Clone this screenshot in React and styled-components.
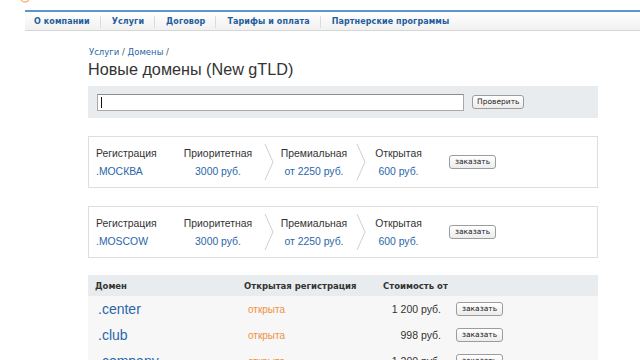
import React from "react";
import styled, { createGlobalStyle } from "styled-components";

const Global = createGlobalStyle`
  html, body { margin: 0; padding: 0; background: #fff; }
  body { font-family: "DejaVu Sans", Verdana, sans-serif; color: #333; overflow: hidden; }
  * { box-sizing: border-box; }
`;

const Page = styled.div`
  width: 640px;
  height: 360px;
  overflow: hidden;
  position: relative;
`;

const LogoBit = styled.svg`
  position: absolute;
  left: 20px;
  top: 0;
`;

const Nav = styled.nav`
  margin: 10px 0 0 25px;
  height: 21px;
  padding-top: 1px;
  border-top: 2px solid #5b97cf;
  border-bottom: 1px solid #d6d6d6;
  background: linear-gradient(#ffffff, #f1f1f1);
  display: flex;
  align-items: center;
`;

const NavItem = styled.a`
  font-family: "DejaVu Sans", Verdana, sans-serif;
  font-weight: bold;
  font-size: 8px;
  letter-spacing: 0.1px;
  color: #1f5d9c;
  text-decoration: none;
  padding: 0 10px 0 ${p => (p.$first ? 9 : 11)}px;
  line-height: 12px;
  border-left: ${p => (p.$first ? "none" : "1px solid #dcdcdc")};
`;

const Main = styled.main`
  width: 510px;
  margin-left: 88px;
  padding-top: 16px;
`;

const Crumbs = styled.div`
  font-size: 8.5px;
  line-height: 11px;
  color: #555;
  padding-left: 1px;
  a { color: #2a66aa; text-decoration: none; }
`;

const Title = styled.h1`
  margin: 0;
  font-family: "Liberation Sans", Arial, sans-serif;
  font-weight: normal;
  font-size: 16.2px;
  line-height: 22px;
  color: #333;
`;

const SearchPanel = styled.div`
  margin-top: 6px;
  height: 32px;
  background: #e8ecee;
  display: flex;
  align-items: center;
  padding-left: 9px;
`;

const InputWrap = styled.div`
  position: relative;
  width: 367px;
  height: 17px;
  background: #fff;
  border: 1px solid #a9a9a9;
  border-top-color: #8c8c8c;
  &::after {
    content: "";
    position: absolute;
    left: 3px;
    top: 2px;
    width: 1px;
    height: 11px;
    background: #111;
  }
`;

const Btn = styled.button`
  font-family: "DejaVu Sans", Verdana, sans-serif;
  font-size: 7.5px;
  color: #222;
  height: 14px;
  padding: 0 ${p => (p.$big ? "4px" : "5px")};
  line-height: 12px;
  border: 1px solid #9c9c9c;
  border-radius: 3px;
  background: linear-gradient(#ffffff, #ececec);
  margin-left: ${p => p.$ml || 0}px;
  cursor: pointer;
  white-space: nowrap;
`;

const Offer = styled.div`
  margin-top: 18px;
  height: 52px;
  border: 1px solid #dedede;
  display: flex;
  align-items: center;
  padding-left: 7px;
`;

const Cell = styled.div`
  display: flex;
  flex-direction: column;
  align-items: ${p => (p.$left ? "flex-start" : "center")};
  width: ${p => p.$w}px;
  padding-top: 1px;
  font-family: "Liberation Sans", Arial, sans-serif;
  font-size: 10.4px;
  line-height: 18px;
  white-space: nowrap;
`;

const Label = styled.span`
  color: #333;
`;

const Value = styled.span`
  color: #2a66aa;
`;

const ChevronSvg = styled.svg`
  flex: none;
`;

const Chevron = ({ x }) => (
  <ChevronSvg width="18" height="38" viewBox="0 0 18 38">
    <path d={`M${x} 1 L${x + 8} 19 L${x} 37`} fill="none" stroke="#cfcfcf" strokeWidth="1" />
  </ChevronSvg>
);

const Table = styled.div`
  margin-top: 17px;
  display: grid;
  grid-template-columns: 149px 139px 72px 1fr;
`;

const Head = styled.div`
  background: #e8ecee;
  height: 21px;
  display: flex;
  align-items: center;
  padding-left: 7px;
  font-family: "DejaVu Sans", Verdana, sans-serif;
  font-weight: bold;
  font-size: 8.5px;
  color: #333;
  white-space: nowrap;
`;

const Td = styled.div`
  background: #f7f7f7;
  height: 26px;
  display: flex;
  align-items: center;
  justify-content: ${p => (p.$right ? "flex-end" : "flex-start")};
  padding: ${p => (p.$right ? "0 7px 0 0" : `0 0 0 ${p.$pl || 0}px`)};
  font-family: "Liberation Sans", Arial, sans-serif;
  white-space: nowrap;
`;

const Domain = styled.a`
  font-size: 14px;
  color: #2a66aa;
  text-decoration: none;
`;

const Status = styled.span`
  font-size: 10px;
  color: #f0913e;
`;

const Price = styled.span`
  font-size: 10.5px;
  color: #333;
`;

const offers = [".МОСКВА", ".MOSCOW"];
const rows = [
  [".center", "1 200 руб."],
  [".club", "998 руб."],
  [".company", "1 200 руб."],
];

export default function App() {
  return (
    <Page>
      <Global />
      <LogoBit width="10" height="4" viewBox="0 0 10 4">
        <path d="M1 0 Q4 4 9 0.5" fill="none" stroke="#f3b060" strokeWidth="1.2" />
      </LogoBit>
      <Nav>
        <NavItem $first href="#">О компании</NavItem>
        <NavItem href="#">Услуги</NavItem>
        <NavItem href="#">Договор</NavItem>
        <NavItem href="#">Тарифы и оплата</NavItem>
        <NavItem href="#">Партнерские программы</NavItem>
      </Nav>
      <Main>
        <Crumbs>
          <a href="#">Услуги</a> / <a href="#">Домены</a> /
        </Crumbs>
        <Title>Новые домены (New gTLD)</Title>
        <SearchPanel>
          <InputWrap />
          <Btn $big $ml={8}>Проверить</Btn>
        </SearchPanel>
        {offers.map(o => (
          <Offer key={o}>
            <Cell $left $w={82}>
              <Label>Регистрация</Label>
              <Value>{o}</Value>
            </Cell>
            <Cell $w={80}>
              <Label>Приоритетная</Label>
              <Value>3000 руб.</Value>
            </Cell>
            <Chevron x={7} />
            <Cell $w={76}>
              <Label>Премиальная</Label>
              <Value>от 2250 руб.</Value>
            </Cell>
            <Chevron x={5} />
            <Cell $w={57}>
              <Label>Открытая</Label>
              <Value>600 руб.</Value>
            </Cell>
            <Btn $ml={22}>заказать</Btn>
          </Offer>
        ))}
        <Table>
          <Head>Домен</Head>
          <Head>Открытая регистрация</Head>
          <Head>Стоимость от</Head>
          <Head />
          {rows.map(([d, p]) => (
            <React.Fragment key={d}>
              <Td $pl={10}><Domain href="#">{d}</Domain></Td>
              <Td $pl={11}><Status>открыта</Status></Td>
              <Td $right><Price>{p}</Price></Td>
              <Td $pl={8}><Btn>заказать</Btn></Td>
            </React.Fragment>
          ))}
        </Table>
      </Main>
    </Page>
  );
}
